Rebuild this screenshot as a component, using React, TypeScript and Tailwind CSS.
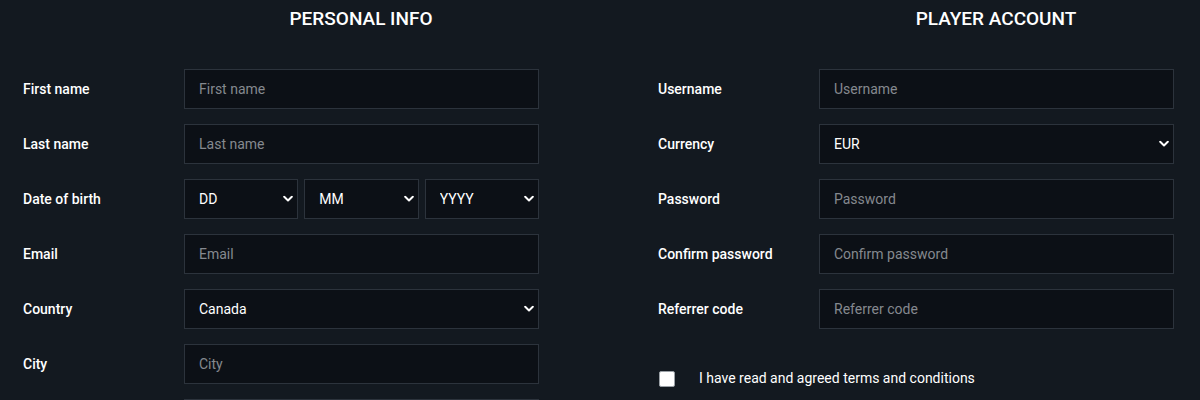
import React from "react";

const font = { fontFamily: "Roboto, 'Liberation Sans', sans-serif" };

function Chevron() {
  return (
    <svg
      className="pointer-events-none absolute right-[5px] top-1/2 -translate-y-1/2"
      width="10"
      height="7"
      viewBox="0 0 10 7"
      fill="none"
    >
      <path d="M1.2 1.3 L5 5 L8.8 1.3" stroke="#ffffff" strokeWidth="2" strokeLinecap="round" strokeLinejoin="round" />
    </svg>
  );
}

function TextInput({ placeholder }: { placeholder?: string }) {
  return (
    <input
      type="text"
      placeholder={placeholder}
      className="h-[40px] w-[355px] border border-[#2c333c] bg-[#0c1016] px-[14px] text-[14px] text-white outline-none placeholder:text-[#85898f]"
    />
  );
}

function Select({ value, options, className }: { value: string; options: string[]; className: string }) {
  return (
    <div className={"relative " + className}>
      <select
        defaultValue={value}
        className="h-[40px] w-full appearance-none rounded-none border border-[#2c333c] bg-[#0c1016] px-[14px] text-[14px] text-white outline-none"
      >
        {options.map((o) => (
          <option key={o}>{o}</option>
        ))}
      </select>
      <Chevron />
    </div>
  );
}

function Row({ label, children }: { label: string; children: React.ReactNode }) {
  return (
    <div className="flex h-[40px] items-center">
      <label className="w-[161px] shrink-0 text-[14px] font-medium text-white">{label}</label>
      {children}
    </div>
  );
}

export default function App() {
  return (
    <div className="h-[400px] w-[1200px] overflow-hidden bg-[#131920]" style={font}>
      <div className="flex">
        <div className="w-[635px] shrink-0 pl-[23px]">
          <h2 className="mb-[33px] h-[36px] w-[676px] pt-[1px] text-center text-[19px] font-medium uppercase leading-[36px] text-white">
            Personal info
          </h2>
          <div className="flex flex-col gap-[15px]">
            <Row label="First name">
              <TextInput placeholder="First name" />
            </Row>
            <Row label="Last name">
              <TextInput placeholder="Last name" />
            </Row>
            <Row label="Date of birth">
              <div className="grid w-[355px] grid-cols-3 gap-[6px]">
                <Select value="DD" options={["DD"]} className="" />
                <Select value="MM" options={["MM"]} className="" />
                <Select value="YYYY" options={["YYYY"]} className="" />
              </div>
            </Row>
            <Row label="Email">
              <TextInput placeholder="Email" />
            </Row>
            <Row label="Country">
              <Select value="Canada" options={["Canada"]} className="w-[355px]" />
            </Row>
            <Row label="City">
              <TextInput placeholder="City" />
            </Row>
            <Row label="">
              <TextInput />
            </Row>
          </div>
        </div>
        <div className="w-[635px] shrink-0 pl-[23px]">
          <h2 className="mb-[33px] h-[36px] w-[676px] pt-[1px] text-center text-[19px] font-medium uppercase leading-[36px] text-white">
            Player account
          </h2>
          <div className="flex flex-col gap-[15px]">
            <Row label="Username">
              <TextInput placeholder="Username" />
            </Row>
            <Row label="Currency">
              <Select value="EUR" options={["EUR"]} className="w-[355px]" />
            </Row>
            <Row label="Password">
              <TextInput placeholder="Password" />
            </Row>
            <Row label="Confirm password">
              <TextInput placeholder="Confirm password" />
            </Row>
            <Row label="Referrer code">
              <TextInput placeholder="Referrer code" />
            </Row>
          </div>
          <div className="mt-[39px] flex items-center">
            <span className="ml-[1px] h-[16px] w-[16px] shrink-0 rounded-[2px] border border-[#9aa0a6] bg-white" />
            <span className="ml-[24px] text-[14px] text-white">I have read and agreed terms and conditions</span>
          </div>
        </div>
      </div>
    </div>
  );
}
